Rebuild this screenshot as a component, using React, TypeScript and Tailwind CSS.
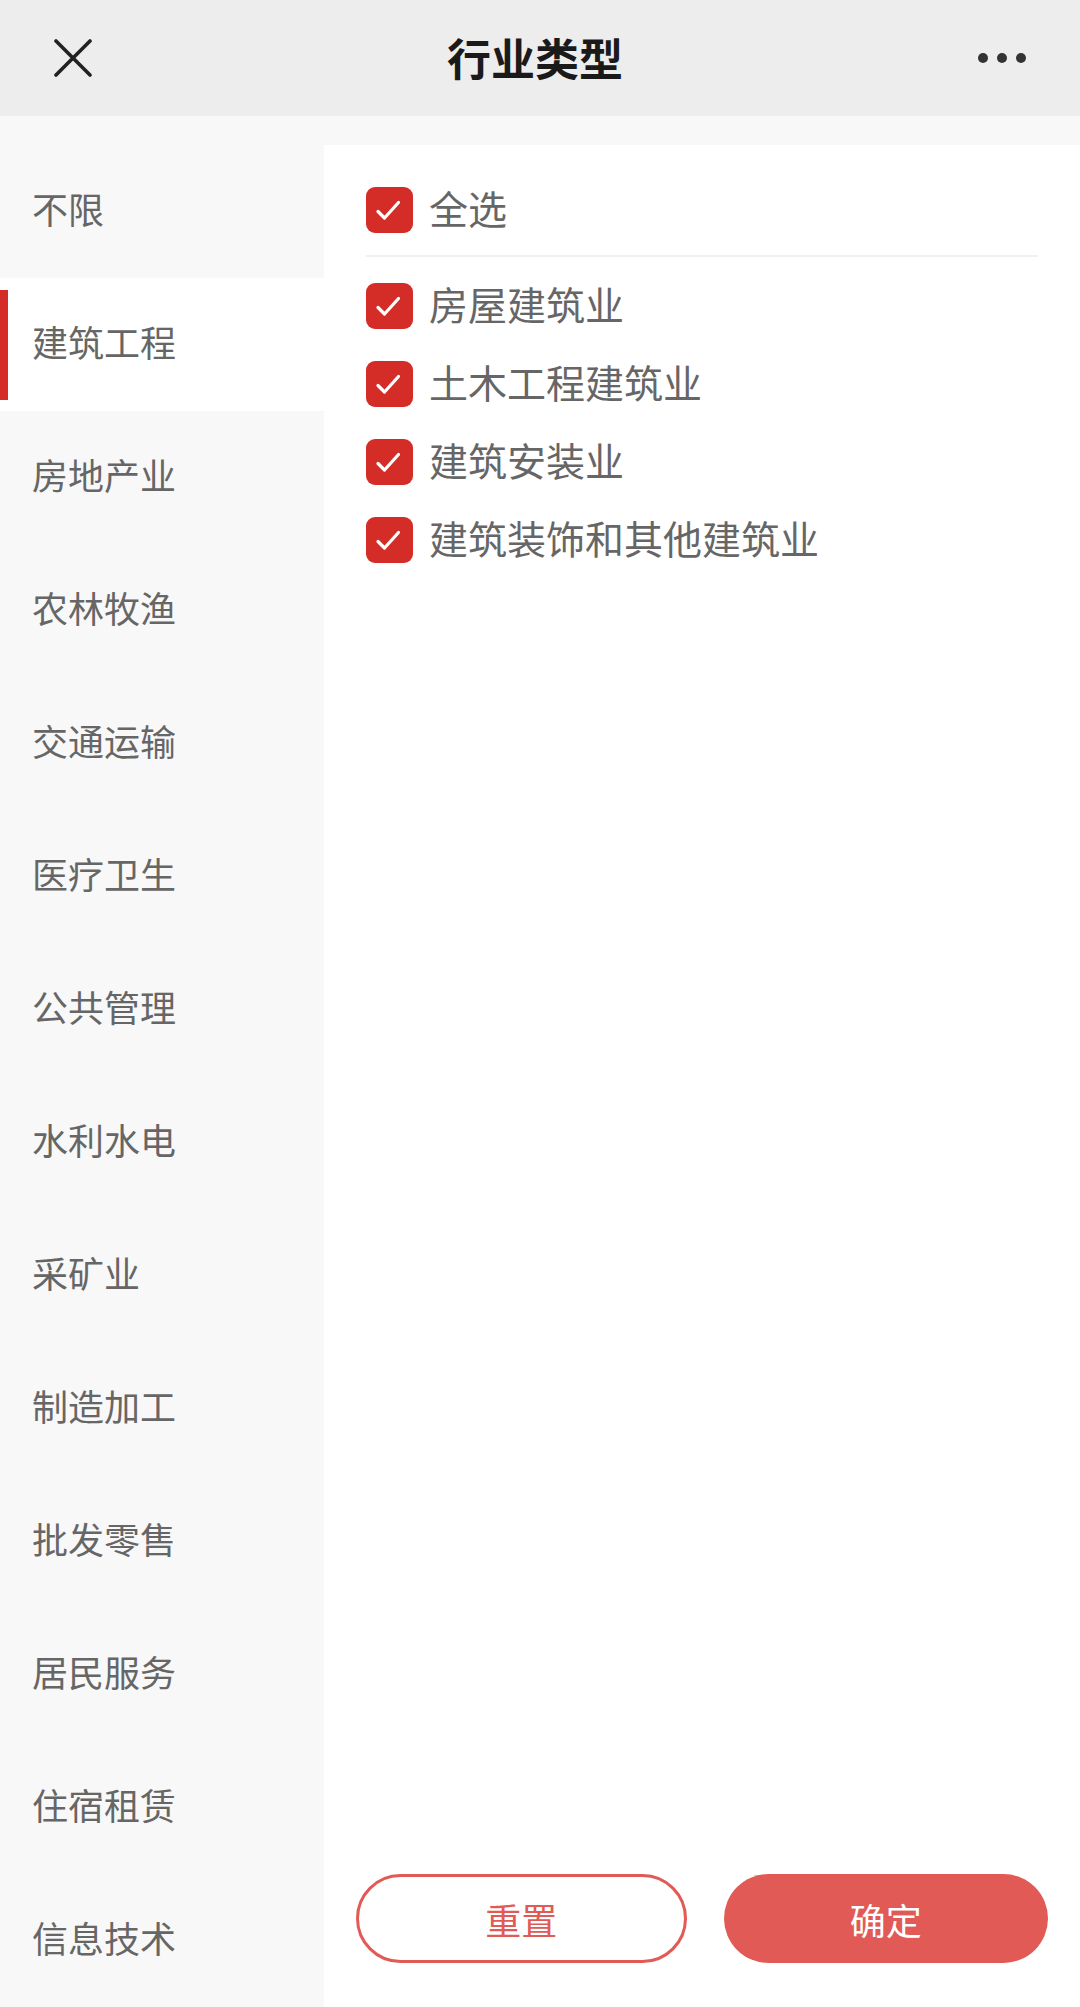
import React from 'react';

const categories = [
  '不限',
  '建筑工程',
  '房地产业',
  '农林牧渔',
  '交通运输',
  '医疗卫生',
  '公共管理',
  '水利水电',
  '采矿业',
  '制造加工',
  '批发零售',
  '居民服务',
  '住宿租赁',
  '信息技术',
];

const subTypes = ['房屋建筑业', '土木工程建筑业', '建筑安装业', '建筑装饰和其他建筑业'];

function CheckBox() {
  return (
    <span className="flex h-[46px] w-[47px] shrink-0 items-center justify-center rounded-[9px] bg-[#d42d27]">
      <svg width="47" height="46" viewBox="0 0 47 46" fill="none">
        <path d="M12 24.5 L18.5 31 L32.5 15.5" stroke="white" strokeWidth="3.2" strokeLinecap="round" strokeLinejoin="round" />
      </svg>
    </span>
  );
}

export default function App() {
  const active = 1;

  return (
    <div
      className="flex h-[2007px] w-[1080px] flex-col overflow-hidden bg-[#f8f8f8]"
      style={{ fontFamily: '"Noto Sans CJK SC", "Noto Sans", sans-serif' }}
    >
      {/* header */}
      <div className="flex h-[116px] shrink-0 items-center justify-between bg-[#ededed] px-[54px]">
        <svg width="38" height="38" viewBox="0 0 38 38" fill="none">
          <path d="M2 2 L36 36 M36 2 L2 36" stroke="#222" strokeWidth="3.6" strokeLinecap="round" />
        </svg>
        <h1 className="pb-[2px] text-[44px] font-bold leading-none text-[#1a1a1a]">行业类型</h1>
        <div className="flex w-[48px] items-center justify-between">
          <span className="h-[10px] w-[10px] rounded-full bg-[#333]" />
          <span className="h-[10px] w-[10px] rounded-full bg-[#333]" />
          <span className="h-[10px] w-[10px] rounded-full bg-[#333]" />
        </div>
      </div>

      {/* body */}
      <div className="flex flex-1 pt-[29px]">
        <ul className="w-[324px] shrink-0">
          {categories.map((name, i) => (
            <li
              key={name}
              className={`relative flex h-[133px] items-center pb-[8px] pl-[32px] text-[36px] text-[#666] ${
                i === active ? 'bg-white' : ''
              }`}
            >
              {i === active && <span className="absolute left-0 top-[12px] h-[110px] w-[8px] bg-[#d42d27]" />}
              {name}
            </li>
          ))}
        </ul>

        <div className="flex flex-1 flex-col bg-white px-[42px] pt-[26px]">
          <div className="flex h-[78px] items-center gap-[16px] text-[39px] text-[#666]">
            <CheckBox />
            <span className="pb-[6px] leading-none">全选</span>
          </div>
          <div className="mt-[6px] h-[2px] bg-[#f0f0f0]" />
          <div className="mt-[10px] flex flex-col">
            {subTypes.map((t) => (
              <div key={t} className="flex h-[78px] items-center gap-[16px] text-[39px] text-[#666]">
                <CheckBox />
                <span className="pb-[6px] leading-none">{t}</span>
              </div>
            ))}
          </div>

          <div className="-mx-[10px] mt-auto mb-[44px] flex gap-[37px]">
            <button className="flex h-[89px] flex-1 items-center justify-center rounded-full border-[3px] border-[#e15a55] text-[36px] text-[#e15a55]">
              重置
            </button>
            <button className="flex h-[89px] flex-1 items-center justify-center rounded-full bg-[#e15a55] text-[36px] text-white">
              确定
            </button>
          </div>
        </div>
      </div>
    </div>
  );
}
